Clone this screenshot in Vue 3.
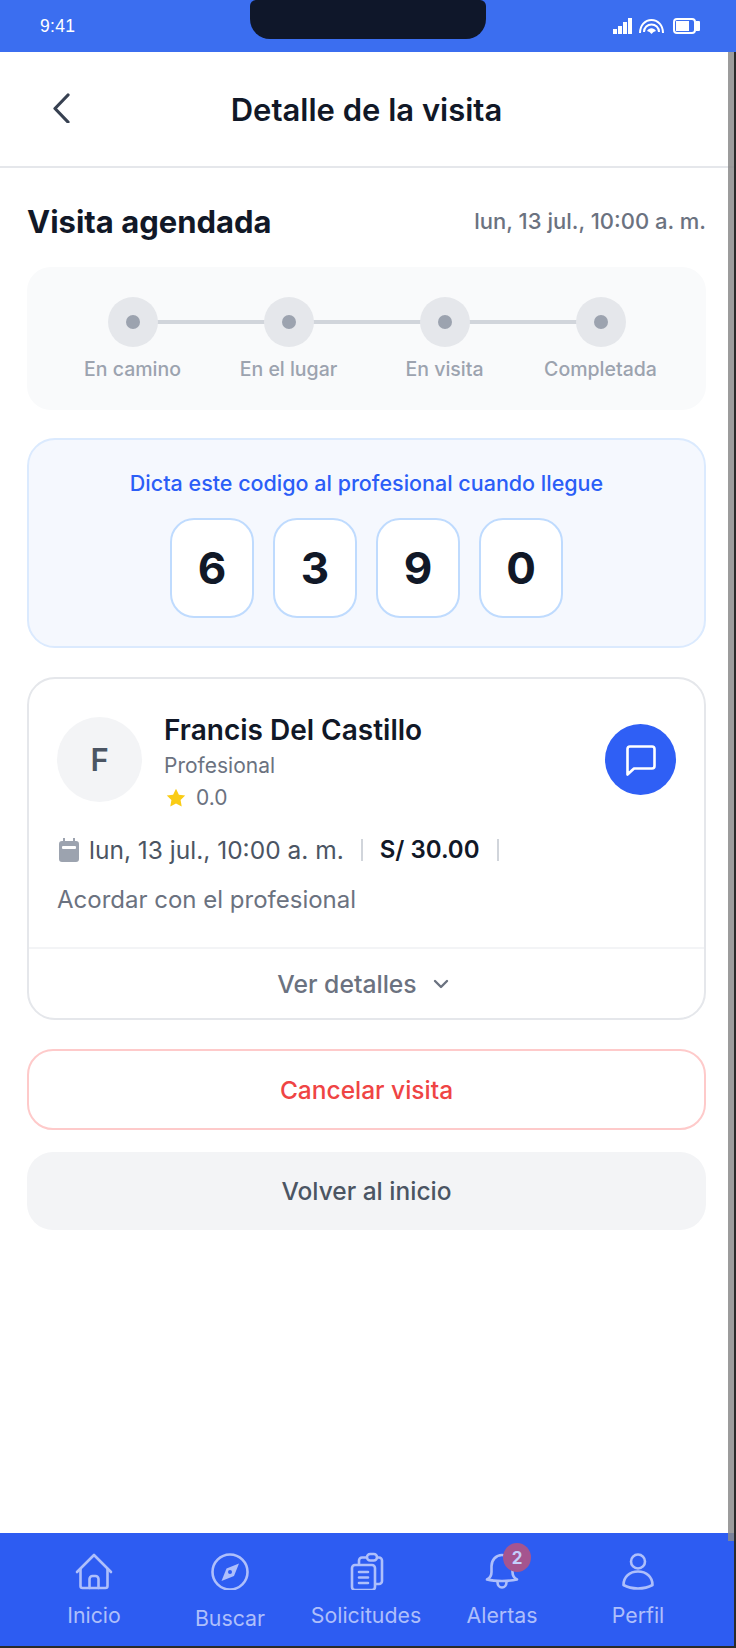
<script setup>
const steps = ['En camino', 'En el lugar', 'En visita', 'Completada'];
const code = ['6', '3', '9', '0'];
const tabs = [
  { key: 'home', label: 'Inicio' },
  { key: 'search', label: 'Buscar' },
  { key: 'requests', label: 'Solicitudes' },
  { key: 'alerts', label: 'Alertas', badge: 2 },
  { key: 'profile', label: 'Perfil' },
];
</script>

<template>
  <div class="device">
    <div class="status-bar">
      <span class="clock">9:41</span>
      <div class="notch"></div>
      <div class="status-icons">
        <svg width="20" height="16" viewBox="0 0 20 16" fill="#fff">
          <rect x="0" y="11" width="4" height="5" />
          <rect x="5" y="8" width="4" height="8" />
          <rect x="10" y="4" width="4" height="12" />
          <rect x="15" y="0" width="4" height="16" />
        </svg>
        <svg class="wifi" width="25" height="15" viewBox="0 0 25 15" fill="none" stroke="#fff" stroke-width="2">
          <path d="M1 14C1 6.500 6 1 12.500 1S24 6.500 24 14" />
          <path d="M5 13C5 8.500 8.500 5.500 12.500 5.500S20 8.500 20 13" />
          <path d="M8 12c1-2 2.800-2.800 4.500-2.800S16 10 17 12l-2.500 1-2 2-2-2z" fill="#fff" stroke="none" />
        </svg>
        <svg width="27" height="16" viewBox="0 0 27 16" fill="none">
          <rect x="1" y="1" width="21" height="14" rx="3" stroke="#fff" stroke-width="2" />
          <rect x="3" y="3" width="13" height="10" fill="#fff" />
          <path d="M23 3h3a1 1 0 0 1 1 1v8a1 1 0 0 1-1 1h-3z" fill="#fff" />
        </svg>
      </div>
    </div>

    <div class="screen">
      <div class="main">
        <header class="top-bar">
          <button class="back" aria-label="Volver">
            <svg width="22" height="30" viewBox="0 0 22 30" fill="none" stroke="#374151" stroke-width="3.200" stroke-linecap="round" stroke-linejoin="round">
              <path d="M18 2 5 15.500 18 29" />
            </svg>
          </button>
          <h1 class="top-title">Detalle de la visita</h1>
        </header>

        <div class="content">
          <div class="heading-row">
            <h2 class="heading">Visita agendada</h2>
            <span class="heading-date">lun, 13 jul., 10:00 a. m.</span>
          </div>

          <section class="stepper">
            <div v-for="step in steps" :key="step" class="step">
              <div class="step-circle"><span class="step-dot"></span></div>
              <span class="step-label">{{ step }}</span>
            </div>
          </section>

          <section class="code-card">
            <p class="code-hint">Dicta este codigo al profesional cuando llegue</p>
            <div class="code-row">
              <div v-for="(digit, i) in code" :key="i" class="code-box">{{ digit }}</div>
            </div>
          </section>

          <section class="pro-card">
            <div class="pro-body">
              <div class="pro-top">
                <div class="avatar">F</div>
                <div class="pro-info">
                  <div class="pro-name">Francis Del Castillo</div>
                  <div class="pro-role">Profesional</div>
                  <div class="pro-rating">
                    <svg width="20" height="20" viewBox="0 0 20 20" fill="#facc15">
                      <path d="M10 .800l2.900 5.900 6.300.900-4.600 4.500 1.100 6.400L10 15.500l-5.700 3 1.100-6.400L.800 7.600l6.300-.900z" />
                    </svg>
                    <span>0.0</span>
                  </div>
                </div>
                <button class="chat-btn" aria-label="Chat">
                  <svg width="34" height="34" viewBox="0 0 34 34" fill="none" stroke="#fff" stroke-width="2.600" stroke-linejoin="round">
                    <path d="M3.500 6A2.500 2.500 0 0 1 6 3.500h22A2.500 2.500 0 0 1 30.500 6v17a2.500 2.500 0 0 1-2.500 2.500H10L3.500 31.500z" />
                  </svg>
                </button>
              </div>
              <div class="pro-meta">
                <svg class="cal" width="20" height="24" viewBox="0 0 20 24">
                  <path fill="#9ca3af" d="M4 0h2v3h8V0h2v3h1a3 3 0 0 1 3 3v15a3 3 0 0 1-3 3H3a3 3 0 0 1-3-3V6a3 3 0 0 1 3-3h1z" />
                  <rect x="3" y="8" width="14" height="3" rx="1" fill="#fff" />
                </svg>
                <span class="meta-date">lun, 13 jul., 10:00 a. m.</span>
                <span class="sep"></span>
                <span class="price">S/ 30.00</span>
                <span class="sep"></span>
              </div>
              <div class="pro-place">Acordar con el profesional</div>
            </div>
            <div class="pro-toggle">
              <span>Ver detalles</span>
              <svg width="16" height="12" viewBox="0 0 16 12" fill="none" stroke="#6b7280" stroke-width="2.400" stroke-linecap="round" stroke-linejoin="round">
                <path d="M2 3l6 6 6-6" />
              </svg>
            </div>
          </section>

          <button class="btn btn-cancel">Cancelar visita</button>
          <button class="btn btn-home">Volver al inicio</button>
        </div>
      </div>

      <nav class="tab-bar">
        <div v-for="tab in tabs" :key="tab.key" class="tab" :class="'tab-' + tab.key">
          <div class="tab-icon">
            <svg v-if="tab.key === 'home'" width="38" height="38" viewBox="0 0 38 38" fill="none" stroke="#aebffb" stroke-width="2.600" stroke-linecap="round" stroke-linejoin="round">
              <path d="M2 20 19 3l17 17" />
              <path d="M5.500 17v17a2 2 0 0 0 2 2h23a2 2 0 0 0 2-2V17" />
              <path d="M14.500 36V27a3 3 0 0 1 3-3h3a3 3 0 0 1 3 3v9" />
            </svg>
            <svg v-else-if="tab.key === 'search'" width="38" height="38" viewBox="0 0 38 38" fill="none" stroke="#aebffb" stroke-width="2.600">
              <circle cx="19" cy="20" r="17.500" />
              <path d="M28 11.500 23 24 10.500 29 15.500 16.500z" fill="#aebffb" stroke="none" />
              <circle cx="19" cy="20" r="2" fill="#2d5cf2" stroke="none" />
            </svg>
            <svg v-else-if="tab.key === 'requests'" width="38" height="38" viewBox="0 0 38 38" fill="none" stroke="#aebffb" stroke-width="2.600" stroke-linecap="round" stroke-linejoin="round">
              <path d="M12 13V8.500a3 3 0 0 1 3-3h17a3 3 0 0 1 3 3V29a3 3 0 0 1-3 3h-3" />
              <rect x="20" y="2" width="10" height="6.500" rx="3.200" fill="#2d5cf2" />
              <rect x="5" y="13" width="23" height="25" rx="3" fill="#2d5cf2" />
              <path d="M12 20h9M12 25.500h9M12 31h9" />
            </svg>
            <svg v-else-if="tab.key === 'alerts'" width="38" height="38" viewBox="0 0 38 38" fill="none" stroke="#aebffb" stroke-width="2.600" stroke-linecap="round" stroke-linejoin="round">
              <path d="M4 27.500c3-1.500 4.500-4 4.500-7.500v-6C8.500 8 13 3 19 3s10.500 5 10.500 11v6c0 3.500 1.500 6 4.500 7.500-4 1-9 1.500-15 1.500s-11-.500-15-1.500z" />
              <path d="M14.500 30a4.500 5.500 0 0 0 9 0" />
            </svg>
            <svg v-else width="38" height="38" viewBox="0 0 38 38" fill="none" stroke="#aebffb" stroke-width="2.600" stroke-linecap="round" stroke-linejoin="round">
              <circle cx="19" cy="9.500" r="7" />
              <path d="M4.500 33c0-8 6-13.500 14.500-13.500S33.500 25 33.500 33c-3.500 2-8.500 3.500-14.500 3.500S8 35 4.500 33z" />
            </svg>
            <span v-if="tab.badge" class="badge">{{ tab.badge }}</span>
          </div>
          <span class="tab-label">{{ tab.label }}</span>
        </div>
      </nav>
      <div class="scroll-thumb"></div>
    </div>
    <div class="base-line"></div>
  </div>
</template>

<style>
html,
body {
  margin: 0;
  background: #fff;
}
</style>

<style scoped>
.device {
  width: 736px;
  height: 1648px;
  display: flex;
  flex-direction: column;
  overflow: hidden;
  font-family: Inter, 'Liberation Sans', sans-serif;
  color: #111827;
}

.status-bar {
  height: 52px;
  flex: none;
  box-sizing: border-box;
  background: #3b6ef0;
  display: flex;
  align-items: center;
  justify-content: space-between;
  padding: 0 36px 0 40px;
  position: relative;
}

.clock {
  font-family: 'Liberation Sans', sans-serif;
  font-size: 17.500px;
  color: #fff;
  letter-spacing: 0.3px;
}

.notch {
  position: absolute;
  left: 250px;
  top: 0;
  width: 236px;
  height: 39px;
  background: #0f172a;
  border-radius: 6px 6px 20px 20px;
}

.status-icons {
  display: flex;
  align-items: center;
  gap: 6px;
}

.wifi {
  margin-right: 3px;
}

.screen {
  flex: 1;
  min-height: 0;
  display: flex;
  flex-direction: column;
  border-right: 2px solid #2a2a2a;
  position: relative;
}

.scroll-thumb {
  position: absolute;
  top: 0;
  right: 0;
  width: 6px;
  height: 1489px;
  background: rgba(137, 137, 137, 0.84);
}

.main {
  flex: 1;
  min-height: 0;
}

.top-bar {
  height: 114px;
  border-bottom: 2px solid #e5e7eb;
  display: flex;
  align-items: center;
  justify-content: center;
  position: relative;
  box-sizing: content-box;
}

.back {
  position: absolute;
  left: 50px;
  top: 41px;
  padding: 0;
  border: 0;
  background: none;
  display: flex;
}

.top-title {
  margin: 0 0 0 -1px;
  font-size: 31px;
  font-weight: 600;
}

.content {
  padding: 29px 28px 0 27px;
  display: flex;
  flex-direction: column;
}

.heading-row {
  display: flex;
  align-items: center;
  justify-content: space-between;
  height: 48px;
}

.heading {
  margin: 0;
  font-size: 31px;
  font-weight: 700;
}

.heading-date {
  font-size: 22px;
  font-weight: 500;
  color: #6b7280;
}

.stepper {
  margin-top: 22px;
  height: 143px;
  box-sizing: border-box;
  padding-top: 30px;
  background: #f9fafb;
  border-radius: 24px;
  display: grid;
  grid-template-columns: repeat(4, 156px);
  justify-content: center;
}

.step {
  display: flex;
  flex-direction: column;
  align-items: center;
  position: relative;
}

.step:not(:last-child)::after {
  content: '';
  position: absolute;
  left: 50%;
  top: 23px;
  width: 156px;
  height: 4px;
  background: #d1d5db;
}

.step-circle {
  width: 50px;
  height: 50px;
  border-radius: 50%;
  background: #e5e7eb;
  display: flex;
  align-items: center;
  justify-content: center;
  position: relative;
  z-index: 1;
}

.step-dot {
  width: 14px;
  height: 14px;
  border-radius: 50%;
  background: #9ca3af;
}

.step-label {
  margin-top: 10px;
  font-size: 19.500px;
  font-weight: 500;
  line-height: 24px;
  color: #9ca3af;
  white-space: nowrap;
}

.code-card {
  margin-top: 28px;
  height: 210px;
  box-sizing: border-box;
  padding-top: 30px;
  background: #f5f8fe;
  border: 2px solid #dbeafe;
  border-radius: 28px;
  text-align: center;
}

.code-hint {
  margin: 0;
  font-size: 21.500px;
  font-weight: 500;
  line-height: 26px;
  color: #2b5ef7;
}

.code-row {
  margin-top: 22px;
  display: flex;
  justify-content: center;
  gap: 18.500px;
}

.code-box {
  width: 84.500px;
  height: 100px;
  box-sizing: border-box;
  background: #fff;
  border: 2px solid #bfdbfe;
  border-radius: 24px;
  display: flex;
  align-items: center;
  justify-content: center;
  font-size: 44px;
  font-weight: 700;
}

.pro-card {
  margin-top: 29px;
  height: 343px;
  box-sizing: border-box;
  border: 2px solid #e5e7eb;
  border-radius: 28px;
  display: flex;
  flex-direction: column;
}

.pro-body {
  flex: 1;
  padding: 24px 28px 0;
}

.pro-top {
  display: flex;
  align-items: center;
}

.avatar {
  width: 85px;
  height: 85px;
  flex: none;
  margin-top: 2px;
  border-radius: 50%;
  background: #f3f4f6;
  display: flex;
  align-items: center;
  justify-content: center;
  font-size: 31px;
  font-weight: 600;
  color: #4b5563;
}

.pro-info {
  flex: 1;
  margin-left: 22px;
  margin-top: 8px;
}

.pro-name {
  font-size: 28px;
  font-weight: 600;
  line-height: 38px;
}

.pro-role {
  font-size: 21px;
  line-height: 33px;
  color: #6b7280;
}

.pro-rating {
  display: flex;
  align-items: center;
  gap: 10px;
  margin-left: 2px;
  font-size: 21px;
  line-height: 32px;
  color: #6b7280;
}

.chat-btn {
  width: 71px;
  height: 71px;
  margin-top: 2px;
  padding: 0;
  border: 0;
  border-radius: 50%;
  background: #2f5ff5;
  display: flex;
  align-items: center;
  justify-content: center;
}

.pro-meta {
  margin-top: 19px;
  display: flex;
  align-items: center;
  font-size: 24px;
  line-height: 34px;
}

.cal {
  margin-left: 2px;
  margin-right: 10px;
}

.meta-date {
  font-size: 24.500px;
  color: #4b5563;
}

.sep {
  width: 2px;
  height: 22px;
  margin: 0 17px;
  background: #d1d5db;
}

.price {
  font-weight: 600;
}

.pro-place {
  margin-top: 16px;
  font-size: 24px;
  line-height: 34px;
  color: #6b7280;
}

.pro-toggle {
  height: 71px;
  flex: none;
  box-sizing: border-box;
  padding-right: 7px;
  border-top: 2px solid #f3f4f6;
  display: flex;
  align-items: center;
  justify-content: center;
  gap: 16px;
  font-size: 24.700px;
  font-weight: 500;
  color: #6b7280;
}

.btn {
  display: block;
  width: 100%;
  padding: 0;
  font-family: inherit;
  font-size: 24.500px;
  font-weight: 500;
  border-radius: 26px;
}

.btn-cancel {
  margin-top: 29px;
  height: 81px;
  background: #fff;
  border: 2px solid #fecaca;
  color: #ef4444;
}

.btn-home {
  margin-top: 22px;
  height: 78px;
  background: #f3f4f6;
  border: 0;
  color: #4b5563;
}

.tab-bar {
  height: 113px;
  flex: none;
  box-sizing: border-box;
  padding: 0 26px;
  background: #2d5cf2;
  display: grid;
  grid-template-columns: repeat(5, 136px);
}

.tab {
  display: flex;
  flex-direction: column;
  align-items: center;
  padding-top: 19px;
}

.tab-icon {
  width: 38px;
  height: 38px;
  position: relative;
}

.tab-label {
  margin-top: 11px;
  font-size: 21.300px;
  line-height: 28px;
  color: #aebffb;
  white-space: nowrap;
}

.tab-search .tab-label {
  margin-top: 14px;
}

.badge {
  position: absolute;
  left: 20px;
  top: -9px;
  width: 28px;
  height: 29px;
  border-radius: 50%;
  background: #a5558f;
  display: flex;
  align-items: center;
  justify-content: center;
  font-size: 17px;
  font-weight: 700;
  color: #c4cffb;
}

.base-line {
  height: 2px;
  flex: none;
  background: #2a2a2a;
}
</style>
